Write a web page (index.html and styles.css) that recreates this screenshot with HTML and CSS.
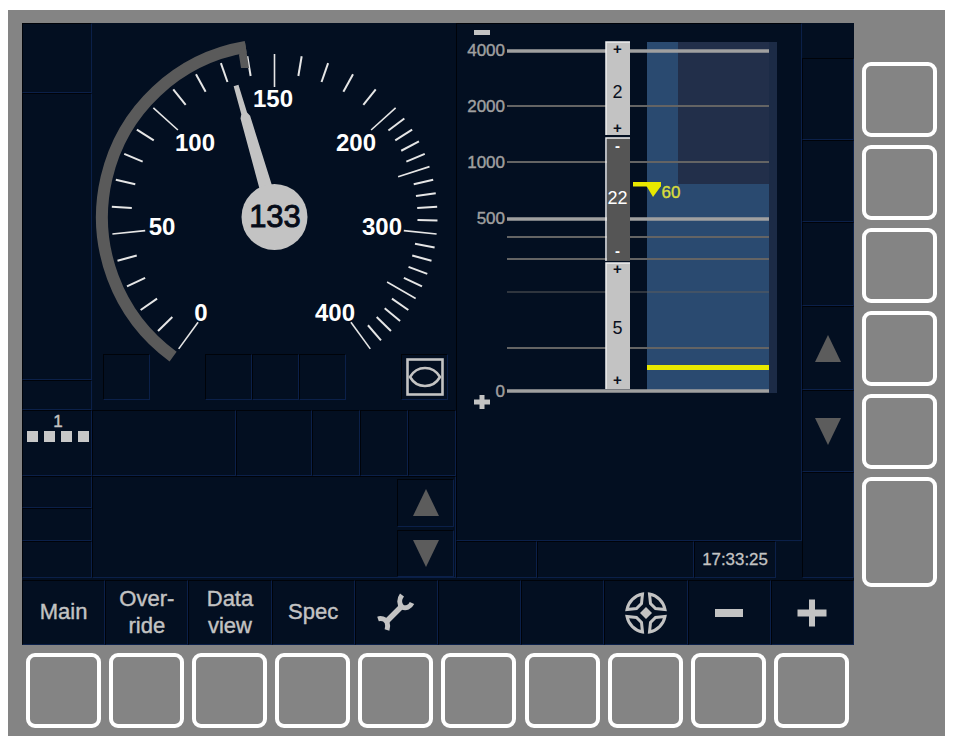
FILE: index.html
```html
<!DOCTYPE html>
<html lang="en">
<head>
  <meta charset="UTF-8">
  <meta name="viewport" content="width=device-width, initial-scale=1.0">
  <title>Driver Machine Interface</title>
  <link rel="stylesheet" href="styles.css">
</head>
<body>
  <main class="panel">
    <div class="screen">
      <div class="workarea">

        <!-- Left column -->
        <div class="col-a">
          <div class="cell"></div>
          <div class="cell"></div>
          <div class="cell"></div>
          <div class="cell level-cell">
            <span class="level-num">1</span>
            <div class="level-dots"><i></i><i></i><i></i><i></i></div>
          </div>
          <div class="cell"></div>
          <div class="cell"></div>
          <div class="cell"></div>
        </div>

        <!-- Speed dial -->
        <div class="col-b">
          <div class="cell gauge-zone">
            <svg class="gauge" id="gauge" width="364" height="331" viewBox="0 0 364 331">
              <g id="gaugeTicks"></g>
              <path id="gaugeArc" class="gauge-arc" d=""></path>
              <polygon class="gauge-hook" points="153,19 157,45 149,45 147,32"></polygon>
              <text class="gauge-label" x="181" y="84">150</text>
              <text class="gauge-label" x="103" y="128">100</text>
              <text class="gauge-label" x="264" y="128">200</text>
              <text class="gauge-label" x="70" y="212">50</text>
              <text class="gauge-label" x="290" y="212">300</text>
              <text class="gauge-label" x="109" y="298">0</text>
              <text class="gauge-label" x="243" y="298">400</text>
              <g id="gaugeNeedle" transform="translate(182.5 194) rotate(-16.3)">
                <polygon class="gauge-needle" points="-2.5,-137 2.5,-137 3,-108 5,-104 6.5,-30 -6.5,-30 -5,-104 -3,-108"></polygon>
              </g>
              <circle class="gauge-hub" cx="182.5" cy="194" r="33"></circle>
              <text class="gauge-speed" x="183" y="204">133</text>
            </svg>
            <div class="status-row">
              <div class="cell status-box"></div>
              <div class="status-gap"></div>
              <div class="cell status-box"></div>
              <div class="cell status-box"></div>
              <div class="cell status-box"></div>
              <div class="status-gap"></div>
              <div class="cell status-box mode-box">
                <svg width="38" height="38" viewBox="0 0 38 38">
                  <rect class="icon-line" x="1.5" y="1.5" width="35" height="35"></rect>
                  <path class="icon-line" d="M4 19 C11 7 27 7 34 19 C27 31 11 31 4 19 Z"></path>
                </svg>
              </div>
            </div>
          </div>

          <div class="info-row">
            <div class="cell"></div>
            <div class="cell"></div>
            <div class="cell"></div>
            <div class="cell"></div>
            <div class="cell"></div>
          </div>

          <div class="cell message-zone">
            <div class="message-arrows">
              <div class="cell arrow-box"><span class="arrow-up"></span></div>
              <div class="cell arrow-box"><span class="arrow-down"></span></div>
            </div>
          </div>
        </div>

        <!-- Planning area -->
        <div class="col-d">
          <div class="cell chart-zone">
            <svg width="344" height="516" viewBox="0 0 344 516" class="chart">
              <rect class="block-mid" x="191" y="19" width="31" height="142"></rect>
              <rect class="block-dark" x="222" y="19" width="91" height="142"></rect>
              <rect class="block-mid" x="191" y="161" width="122" height="207"></rect>
              <rect class="block-strip" x="313" y="19" width="8" height="351"></rect>

              <line class="grid-thick" x1="51" x2="313" y1="28" y2="28"></line>
              <line class="grid-thin" x1="51" x2="313" y1="83" y2="83"></line>
              <line class="grid-thin" x1="51" x2="313" y1="139" y2="139"></line>
              <line class="grid-thick" x1="51" x2="313" y1="196" y2="196"></line>
              <line class="grid-thin" x1="51" x2="313" y1="214" y2="214"></line>
              <line class="grid-thin" x1="51" x2="313" y1="236" y2="236"></line>
              <line class="grid-hair" x1="51" x2="313" y1="269" y2="269"></line>
              <line class="grid-thin" x1="51" x2="313" y1="325" y2="325"></line>
              <line class="grid-thick" x1="51" x2="313" y1="368" y2="368"></line>

              <text class="grid-label" x="49" y="33">4000</text>
              <text class="grid-label" x="49" y="89">2000</text>
              <text class="grid-label" x="49" y="145">1000</text>
              <text class="grid-label" x="49" y="201">500</text>
              <text class="grid-label" x="49" y="374">0</text>

              <rect class="zoom-mark" x="18" y="7" width="16" height="5"></rect>
              <rect class="zoom-mark" x="18" y="376.5" width="16" height="5"></rect>
              <rect class="zoom-mark" x="23.5" y="372" width="5" height="14"></rect>

              <rect class="scale-light" x="150" y="19" width="24" height="93"></rect>
              <rect class="scale-dark" x="151" y="115" width="23" height="123"></rect>
              <rect class="scale-light" x="150" y="240" width="24" height="126"></rect>
              <path class="scale-edge" d="M174 19 H150 V112 M174 115 H150 V238 M174 240 H150 V366"></path>

              <text class="scale-sign" x="161.5" y="31">+</text>
              <text class="scale-num" x="161.5" y="75">2</text>
              <text class="scale-sign" x="161.5" y="110">+</text>
              <text class="scale-sign light" x="161.5" y="128">-</text>
              <text class="scale-num light" x="161.5" y="181">22</text>
              <text class="scale-sign light" x="161.5" y="233">-</text>
              <text class="scale-sign" x="161.5" y="251">+</text>
              <text class="scale-num" x="161.5" y="311">5</text>
              <text class="scale-sign" x="161.5" y="362">+</text>

              <rect class="speed-mark" x="177" y="159" width="28" height="4.5"></rect>
              <polygon class="speed-mark" points="190.5,163 205,163 197,174"></polygon>
              <text class="speed-target" x="205.5" y="175">60</text>
              <rect class="speed-mark" x="191" y="342" width="122" height="5"></rect>
            </svg>
          </div>
          <div class="clock-row">
            <div class="cell"></div>
            <div class="cell"></div>
            <div class="cell clock">17:33:25</div>
          </div>
        </div>

        <!-- Right column -->
        <div class="col-e">
          <div class="blank"></div>
          <div class="cell"></div>
          <div class="cell"></div>
          <div class="cell"></div>
          <div class="cell arrow-box"><span class="arrow-up"></span></div>
          <div class="cell arrow-box"><span class="arrow-down"></span></div>
          <div class="cell"></div>
        </div>
      </div>

      <!-- Menu bar -->
      <nav class="menu">
        <div class="cell menu-btn">Main</div>
        <div class="cell menu-btn">Over-<br>ride</div>
        <div class="cell menu-btn">Data<br>view</div>
        <div class="cell menu-btn">Spec</div>
        <div class="cell menu-btn icon-btn">
          <svg width="48" height="48" viewBox="24 14 48 48">
            <path class="wrench" d="M54 20 C51 24 51 29 54 32 C58 34 62 32 64 28"></path>
            <path class="wrench" d="M30 44 C33 43 37 44 39 47 C40 50 40 52 39 55"></path>
            <path class="wrench-handle" d="M38 47 L53 32"></path>
          </svg>
        </div>
        <div class="cell menu-btn"></div>
        <div class="cell menu-btn"></div>
        <div class="cell menu-btn icon-btn">
          <svg width="44" height="44" viewBox="-22 -22 44 44">
            <path class="nav-leaf" d="M-3.5 -19 A19.5 19.5 0 0 0 -19 -3.5 L-9.5 -4.5 L-4.5 -9.5 Z"></path>
            <path class="nav-leaf" transform="rotate(90)" d="M-3.5 -19 A19.5 19.5 0 0 0 -19 -3.5 L-9.5 -4.5 L-4.5 -9.5 Z"></path>
            <path class="nav-leaf" transform="rotate(180)" d="M-3.5 -19 A19.5 19.5 0 0 0 -19 -3.5 L-9.5 -4.5 L-4.5 -9.5 Z"></path>
            <path class="nav-leaf" transform="rotate(270)" d="M-3.5 -19 A19.5 19.5 0 0 0 -19 -3.5 L-9.5 -4.5 L-4.5 -9.5 Z"></path>
            <polygon class="nav-core" points="0,-6 6,0 0,6 -6,0"></polygon>
          </svg>
        </div>
        <div class="cell menu-btn icon-btn">
          <svg width="30" height="10" viewBox="0 0 30 10">
            <rect class="nav-core" x="1" y="1" width="28" height="8"></rect>
          </svg>
        </div>
        <div class="cell menu-btn icon-btn">
          <svg width="30" height="28" viewBox="0 0 30 28">
            <rect class="nav-core" x="0.5" y="10.5" width="29" height="7"></rect>
            <rect class="nav-core" x="12" y="0.5" width="6" height="27"></rect>
          </svg>
        </div>
      </nav>
    </div>

    <!-- Soft keys around the screen -->
    <div class="keys-right">
      <div class="softkey"></div>
      <div class="softkey"></div>
      <div class="softkey"></div>
      <div class="softkey"></div>
      <div class="softkey"></div>
      <div class="softkey tall"></div>
    </div>
    <div class="keys-bottom">
      <div class="softkey"></div>
      <div class="softkey"></div>
      <div class="softkey"></div>
      <div class="softkey"></div>
      <div class="softkey"></div>
      <div class="softkey"></div>
      <div class="softkey"></div>
      <div class="softkey"></div>
      <div class="softkey"></div>
      <div class="softkey"></div>
    </div>
  </main>
  <script src="gauge.js"></script>
</body>
</html>
```

FILE: styles.css
```css
* {
  box-sizing: border-box;
}

body {
  margin: 10px 0 0 8px;
  background-color: white;
  font-family: "Liberation Sans", Arial, sans-serif;
}

.panel {
  display: grid;
  grid-template-columns: 832px 1fr;
  grid-template-rows: 622px 1fr;
  width: 937px;
  height: 726px;
  padding: 13px 0 0 14px;
  background-color: #848484;
}

.screen {
  background-color: #030f21;
}

.cell {
  border: 1px solid;
  border-color: #000309 #0b2049 #0b2049 #000309;
}

.workarea {
  display: flex;
  height: 555px;
}

.col-a {
  display: grid;
  grid-template-rows: 70px 287px 30px 66px 32px 33px 37px;
  width: 70px;
}

.col-b {
  display: grid;
  grid-template-rows: 387px 66px 102px;
  width: 364px;
}

.col-d {
  display: grid;
  grid-template-rows: 518px 37px;
  width: 346px;
}

.col-e {
  display: grid;
  grid-template-rows: 35px 82px 82px 84px 84px 82px 106px;
  width: 52px;
}

/* level indicator */
.level-cell {
  padding: 4px 0 0 4px;
}

.level-num {
  display: block;
  width: 62px;
  height: 14px;
  color: #c3c3c3;
  font-size: 17px;
  line-height: 14px;
  text-align: center;
  -webkit-text-stroke: 0.4px #c3c3c3;
}

.level-dots {
  display: flex;
  gap: 6px;
  margin-top: 2px;
}

.level-dots i {
  width: 11px;
  height: 11px;
  background-color: #c8c8c8;
}

/* speed dial */
.gauge-zone {
  display: flex;
  flex-direction: column;
  border-width: 0;
}

.gauge {
  display: block;
  overflow: visible;
}

.gauge-tick {
  stroke: #e6e6e6;
  stroke-width: 2;
}

.gauge-tick.major {
  stroke-width: 1.6;
}

.gauge-arc {
  fill: none;
  stroke: #5a5a5a;
  stroke-width: 12;
}

.gauge-hook {
  fill: #5a5a5a;
}

.gauge-label {
  fill: white;
  font-size: 24px;
  font-weight: bold;
  text-anchor: middle;
}

.gauge-needle,
.gauge-hub {
  fill: #c3c3c3;
}

.gauge-speed {
  fill: #060b18;
  font-size: 31px;
  text-anchor: middle;
  stroke: #060b18;
  stroke-width: 0.9;
}

.status-row {
  display: flex;
  height: 46px;
  padding-left: 11px;
}

.status-box {
  width: 47px;
}

.status-gap {
  width: 55px;
}

.mode-box {
  display: flex;
  align-items: center;
  justify-content: center;
}

.icon-line {
  fill: none;
  stroke: #c3c3c3;
  stroke-width: 2.6;
}

.info-row {
  display: grid;
  grid-template-columns: 144px 76px 48px 48px 48px;
}

.message-zone {
  display: flex;
  justify-content: flex-end;
  padding: 2px 1px 0 0;
}

.message-arrows {
  display: flex;
  flex-direction: column;
  gap: 3px;
  width: 57px;
}

.arrow-box {
  display: flex;
  align-items: center;
  justify-content: center;
  height: 48px;
}

.col-e .arrow-box {
  height: auto;
}

.arrow-up,
.arrow-down {
  width: 0;
  height: 0;
  border-left: 13.5px solid transparent;
  border-right: 13.5px solid transparent;
}

.arrow-up {
  border-bottom: 27px solid #5c5c5c;
}

.arrow-down {
  border-top: 27px solid #5c5c5c;
}

/* planning chart */
.chart {
  display: block;
  margin: -1px;
}

.block-mid {
  fill: #2a4a70;
}

.block-dark {
  fill: #222f4a;
}

.block-strip {
  fill: #1c2b46;
}

.grid-thick {
  stroke: #a0a0a0;
  stroke-width: 3.5;
}

.grid-thin {
  stroke: #646464;
  stroke-width: 2;
}

.grid-hair {
  stroke: #5c5c5c;
  stroke-width: 1.2;
}

.grid-label {
  fill: #a0a0a0;
  stroke: #a0a0a0;
  stroke-width: 0.4;
  font-size: 17px;
  text-anchor: end;
}

.zoom-mark {
  fill: #c3c3c3;
}

.scale-light {
  fill: #c3c3c3;
}

.scale-dark {
  fill: #555555;
}

.scale-edge {
  fill: none;
  stroke: #f0f0f0;
  stroke-width: 1.5;
}

.scale-sign {
  fill: #0a1020;
  font-size: 15px;
  font-weight: bold;
  text-anchor: middle;
}

.scale-num {
  fill: #0a1020;
  font-size: 18px;
  text-anchor: middle;
}

.scale-sign.light,
.scale-num.light {
  fill: white;
}

.speed-mark {
  fill: #e8e800;
}

.speed-target {
  fill: #d8dc3c;
  stroke: #d8dc3c;
  stroke-width: 0.4;
  font-size: 17px;
}

.clock-row {
  display: grid;
  grid-template-columns: 81px 157px 82px;
}

.clock {
  display: flex;
  align-items: center;
  justify-content: center;
  color: #c3c3c3;
  font-size: 16.9px;
  -webkit-text-stroke: 0.3px #c3c3c3;
}

/* menu bar */
.menu {
  display: grid;
  grid-template-columns: repeat(10, 1fr);
  height: 65px;
  margin-top: 2px;
}

.menu-btn {
  display: flex;
  align-items: center;
  justify-content: center;
  padding-bottom: 2px;
  color: #c3c3c3;
  font-size: 22px;
  line-height: 27px;
  text-align: center;
  -webkit-text-stroke: 0.4px #c3c3c3;
}

.menu-btn.icon-btn {
  padding-bottom: 0;
}

.wrench {
  fill: none;
  stroke: #c3c3c3;
  stroke-width: 5;
}

.wrench-handle {
  fill: none;
  stroke: #c3c3c3;
  stroke-width: 5.5;
}

.nav-leaf {
  fill: none;
  stroke: #c3c3c3;
  stroke-width: 3;
}

.nav-core {
  fill: #c3c3c3;
}

/* soft keys */
.softkey {
  width: 75px;
  height: 75px;
  border: 4px solid white;
  border-radius: 9px;
}

.softkey.tall {
  height: 110px;
}

.keys-right {
  display: flex;
  flex-direction: column;
  gap: 8px;
  padding: 39px 0 0 8px;
}

.keys-bottom {
  display: flex;
  gap: 8.1px;
  padding: 8px 0 0 4px;
}
```

FILE: gauge.js
```js
// Speed dial: 0-200 takes 0.96 deg per km/h, 200-400 takes 0.48 deg per km/h
const CX = 182.5;
const CY = 194;
const SVG_NS = "http://www.w3.org/2000/svg";

function speedToAngle(speed) {
  if (speed <= 200) return (speed - 150) * 0.96;
  return 48 + (speed - 200) * 0.48;
}

function polar(r, deg) {
  const a = deg * Math.PI / 180;
  return [CX + r * Math.sin(a), CY - r * Math.cos(a)];
}

const ticks = document.getElementById("gaugeTicks");
for (let v = 0; v <= 400; v += 10) {
  const major = v % 50 === 0;
  const angle = speedToAngle(v);
  const [x1, y1] = polar(major ? 130 : 143, angle);
  const [x2, y2] = polar(163, angle);
  const line = document.createElementNS(SVG_NS, "line");
  line.setAttribute("class", major ? "gauge-tick major" : "gauge-tick");
  line.setAttribute("x1", x1);
  line.setAttribute("y1", y1);
  line.setAttribute("x2", x2);
  line.setAttribute("y2", y2);
  ticks.appendChild(line);
}

// Grey arc from 0 up to the permitted speed
const [sx, sy] = polar(172.5, speedToAngle(0));
const [ex, ey] = polar(172.5, speedToAngle(140));
document.getElementById("gaugeArc").setAttribute("d", `M${sx} ${sy} A172.5 172.5 0 0 1 ${ex} ${ey}`);
```
